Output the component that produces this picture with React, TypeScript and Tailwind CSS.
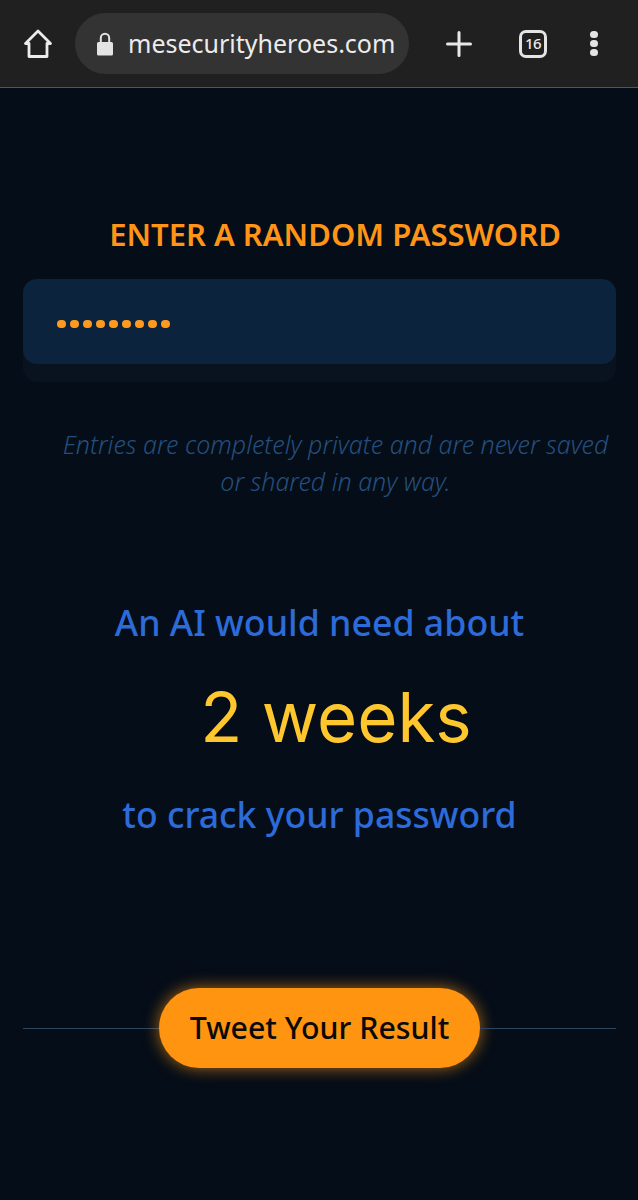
import React from "react";

const Dots = () => (
  <div className="flex items-center gap-[4.3px]">
    {Array.from({ length: 9 }).map((_, i) => (
      <span key={i} className="block w-[8.7px] h-[8.7px] rounded-full bg-[#ff9a1f]" />
    ))}
  </div>
);

export default function App() {
  return (
    <div className="w-[638px] h-[1200px] overflow-hidden bg-[#050d18] font-['Noto_Sans',sans-serif] flex flex-col">
      <header className="h-[88px] shrink-0 bg-[#202020] border-b border-b-[#555] flex items-center pl-[23px]">
        <svg width="30" height="30" viewBox="0 0 30 30" fill="none" stroke="#ececec" strokeWidth="2.8" strokeLinejoin="round" strokeLinecap="round" className="shrink-0">
          <path d="M15 2 L27.5 14.5 H24 V27.5 H6 V14.5 H2.5 Z" />
        </svg>
        <div className="ml-[22px] w-[334px] h-[61px] rounded-full bg-[#333333] flex items-center pl-[21px] shrink-0">
          <svg width="18" height="24" viewBox="0 0 18 24" className="shrink-0" fill="#e4e4e4">
            <path d="M2.5 10 H15.5 a1.5 1.5 0 0 1 1.5 1.5 V22 a1.5 1.5 0 0 1 -1.5 1.5 H2.5 A1.5 1.5 0 0 1 1 22 V11.5 A1.5 1.5 0 0 1 2.5 10 Z" />
            <path d="M4.8 10 V6 a4.2 4.2 0 0 1 8.4 0 V10" fill="none" stroke="#e4e4e4" strokeWidth="2" />
          </svg>
          <span className="ml-[14px] text-[25px] leading-none text-[#ececec] whitespace-nowrap">mesecurityheroes.com</span>
        </div>
        <svg width="26" height="26" viewBox="0 0 26 26" stroke="#e8e8e8" strokeWidth="3" strokeLinecap="round" className="ml-[37px] shrink-0">
          <path d="M13 1.5 V24.5 M1.5 13 H24.5" />
        </svg>
        <div className="ml-[47px] w-[28px] h-[28px] rounded-[7px] border-[3px] border-[#e4e4e4] flex items-center justify-center text-[15px] tracking-[-0.5px] font-medium text-[#ececec] shrink-0">16</div>
        <div className="ml-[43px] flex flex-col gap-[1.7px] shrink-0">
          <span className="block w-[7.5px] h-[7.5px] rounded-full bg-[#e4e4e4]" />
          <span className="block w-[7.5px] h-[7.5px] rounded-full bg-[#e4e4e4]" />
          <span className="block w-[7.5px] h-[7.5px] rounded-full bg-[#e4e4e4]" />
        </div>
      </header>

      <main className="flex flex-col pl-[23px] pr-[22px] pt-[124px]">
        <h1 className="pl-[31px] text-center text-[31px] leading-[44px] font-semibold text-[#ff9416] whitespace-nowrap">ENTER A RANDOM PASSWORD</h1>
        <div className="mt-[23px] h-[85px] rounded-[14px] bg-[#0b233c] shadow-[0_18px_0_#08131f] flex items-center pl-[34px] pt-[5px]">
          <Dots />
        </div>
        <p className="mt-[62px] pl-[32px] text-center text-[25px] leading-[37px] italic font-light text-[#244f7d]">
          Entries are completely private and are never saved or shared in any way.
        </p>
        <p className="mt-[99px] text-center text-[35.7px] leading-[46px] font-medium text-[#2c6bd8]">An AI would need about</p>
        <p className="mt-[32px] pl-[33px] text-center text-[69px] leading-[80px] font-['Inter',sans-serif] text-[#ffc72e]">2 weeks</p>
        <p className="mt-[34px] text-center text-[35.6px] leading-[46px] font-medium text-[#2c6bd8]">to crack your password</p>
        <div className="mt-[151px] flex items-center">
          <div className="h-px flex-1 bg-[#2d4560]" />
          <button className="w-[321px] h-[80px] rounded-full bg-[#ff9410] text-[30.3px] font-medium text-[#0a0a0a] shadow-[0_0_16px_#ff9410aa] shrink-0">Tweet Your Result</button>
          <div className="h-px flex-1 bg-[#2d4560]" />
        </div>
      </main>
    </div>
  );
}
